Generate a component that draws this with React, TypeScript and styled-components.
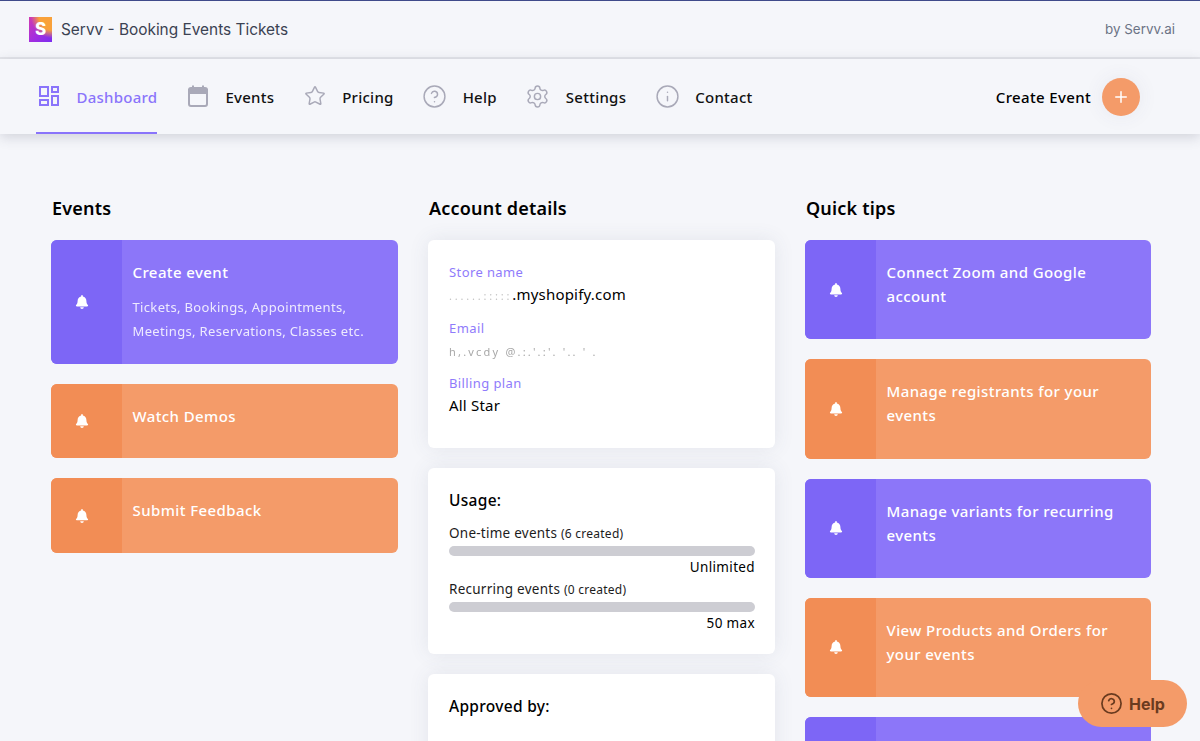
import React from 'react';
import styled, { createGlobalStyle } from 'styled-components';
import { CircleHelp, Info, Plus, Settings, Star } from 'lucide-react';
import { FaBell } from 'react-icons/fa';

const MAVEN = '"Noto Sans", "Open Sans", sans-serif';

const GlobalStyle = createGlobalStyle`
  html, body {
    margin: 0;
    height: 100%;
    overflow: hidden;
    background: #f5f6fa;
  }
  * {
    box-sizing: border-box;
  }
`;

const Page = styled.div`
  height: 741px;
  overflow: hidden;
  border-top: 1px solid #3f4a8a;
  font-family: ${MAVEN};
  color: #000;
`;

const TitleBar = styled.header`
  height: 58px;
  padding: 0 25px 0 29px;
  display: flex;
  align-items: center;
  justify-content: space-between;
  border-bottom: 2px solid #e4e5ea;
  font-family: Inter, sans-serif;
`;

const Brand = styled.div`
  display: flex;
  align-items: center;
  gap: 9px;
  font-size: 15.4px;
  color: #3b4252;
`;

const Logo = styled.div`
  width: 23px;
  height: 25px;
  display: flex;
  align-items: center;
  justify-content: center;
  color: #fff;
  font-size: 17px;
  font-weight: 800;
  background:
    radial-gradient(circle at 100% 0, #f9a13a 0 38%, transparent 62%),
    linear-gradient(135deg, #d13bb0 0%, #a32de0 55%, #7b2df0 100%);
`;

const ByLine = styled.span`
  font-size: 13.4px;
  color: #6b7385;
`;

const NavBar = styled.nav`
  height: 75px;
  padding: 0 60px 0 36px;
  display: flex;
  align-items: stretch;
  justify-content: space-between;
  box-shadow: 0 3px 12px rgba(60, 64, 90, 0.2);
`;

const NavList = styled.div`
  display: flex;
  gap: 27.5px;
`;

const NavItem = styled.a<{ $active?: boolean }>`
  display: flex;
  align-items: center;
  gap: 17.5px;
  padding-left: 3px;
  font-size: 15px;
  font-weight: 500;
  letter-spacing: 0.25px;
  color: ${props => (props.$active ? '#8a74fb' : '#111')};
  border-bottom: 2px solid ${props => (props.$active ? '#8a74fb' : 'transparent')};
  svg {
    flex: none;
    color: ${props => (props.$active ? '#8a74fb' : '#a9a9b8')};
  }
`;

const NavLabel = styled.span`
  margin-top: 2px;
`;

const StarIcon = styled(Star)`
  margin: 0 -1px;
`;

const RoundIcon = styled.span`
  display: flex;
  margin: 1px -2px 0;
`;

const CreateWrap = styled.div`
  display: flex;
  align-items: center;
  gap: 11px;
  font-size: 15px;
  font-weight: 500;
  letter-spacing: 0.35px;
`;

const PlusButton = styled.div`
  width: 38px;
  height: 38px;
  border-radius: 50%;
  display: flex;
  align-items: center;
  justify-content: center;
  color: #fff;
  background: #f49b69;
  box-shadow: 0 0 20px rgba(80, 80, 120, 0.08);
`;

const Columns = styled.main`
  padding: 63px 49px 0 51px;
  display: grid;
  grid-template-columns: 347px 347px 346px;
  column-gap: 30px;
`;

const Column = styled.section`
  display: flex;
  flex-direction: column;
  gap: 20px;
`;

const ColumnTitle = styled.h2`
  margin: 0 0 1px;
  height: 22px;
  line-height: 22px;
  font-size: 18px;
  font-weight: 600;
  letter-spacing: 0.2px;
  padding-left: 1px;
`;

const ActionCard = styled.div<{ $tone: 'purple' | 'orange'; $height: number }>`
  height: ${props => props.$height}px;
  flex: none;
  display: flex;
  border-radius: 6px;
  overflow: hidden;
  color: #fff;
  background: ${props => (props.$tone === 'purple' ? '#8c76f9' : '#f49b69')};
`;

const IconStrip = styled.div<{ $tone: 'purple' | 'orange' }>`
  width: 71px;
  flex: none;
  padding-right: 9px;
  display: flex;
  align-items: center;
  justify-content: center;
  font-size: 14px;
  background: ${props => (props.$tone === 'purple' ? '#7d66f6' : '#f28d55')};
`;

const CardBody = styled.div`
  flex: 1;
  padding: 20px 24px 0 10.5px;
`;

const CardHeading = styled.div`
  font-size: 15px;
  font-weight: 500;
  line-height: 24px;
  letter-spacing: 0.4px;
`;

const CardText = styled.div`
  margin-top: 11px;
  font-size: 13px;
  line-height: 24px;
  letter-spacing: 0.35px;
  opacity: 0.85;
  white-space: nowrap;
`;

const InfoCard = styled.div<{ $height: number }>`
  height: ${props => props.$height}px;
  flex: none;
  padding: 20px 20px 0 21px;
  border-radius: 6px;
  background: #fff;
  box-shadow: 0 0 20px rgba(70, 75, 110, 0.1);
`;

const FieldList = styled.div`
  padding-top: 4px;
`;

const FieldLabel = styled.div`
  height: 17px;
  line-height: 17px;
  margin-bottom: 3px;
  font-size: 13px;
  letter-spacing: 0.4px;
  color: #8f7bfb;
`;

const FieldValue = styled.div`
  height: 21px;
  margin-bottom: 14.5px;
  line-height: 21px;
  font-size: 15px;
  letter-spacing: 0.2px;
  white-space: nowrap;
`;

const Redacted = styled.span<{ $spacing: number; $tone: string }>`
  color: ${props => props.$tone};
  filter: blur(0.7px);
  font-size: 11px;
  letter-spacing: ${props => props.$spacing}px;
`;

const CardHeader = styled.div`
  height: 24px;
  line-height: 24px;
  margin-bottom: 11px;
  font-size: 15.5px;
  font-weight: 500;
  letter-spacing: 0.3px;
`;

const UsageLabel = styled.div`
  height: 20px;
  line-height: 20px;
  font-size: 13.5px;
  letter-spacing: 0.25px;
  color: #1c1c1c;
  small {
    font-size: 12px;
  }
`;

const Track = styled.div`
  height: 10px;
  margin-top: 3px;
  border-radius: 5px;
  background: #cdcdd3;
`;

const UsageLimit = styled.div`
  height: 23px;
  line-height: 22px;
  text-align: right;
  font-size: 13.5px;
  letter-spacing: 0.35px;
`;

const HelpFab = styled.button`
  position: fixed;
  right: 13px;
  bottom: 14px;
  width: 109px;
  height: 47px;
  display: flex;
  align-items: center;
  justify-content: center;
  gap: 6px;
  border: 0;
  border-radius: 24px;
  font-family: Inter, sans-serif;
  font-size: 16px;
  font-weight: 700;
  color: #6a3b1f;
  background: #f49b69;
`;

const DashboardIcon = () => (
  <svg width="20" height="20" viewBox="0 0 20 20" fill="none" stroke="currentColor" strokeWidth="2">
    <rect x="1" y="1" width="8" height="9" />
    <rect x="13" y="1" width="6" height="5" />
    <rect x="1" y="14" width="8" height="5" />
    <rect x="13" y="10" width="6" height="9" />
  </svg>
);

const CalendarIcon = () => (
  <svg width="20" height="22" viewBox="0 0 20 22" fill="none" stroke="currentColor" strokeWidth="2">
    <rect x="1" y="3" width="18" height="18" rx="2" />
    <path d="M1 5h18v3H1z" fill="currentColor" />
    <path d="M5 0.5v3M15 0.5v3" />
  </svg>
);

const tips: { label: string; tone: 'purple' | 'orange' }[] = [
  { label: 'Connect Zoom and Google account', tone: 'purple' },
  { label: 'Manage registrants for your events', tone: 'orange' },
  { label: 'Manage variants for recurring events', tone: 'purple' },
  { label: 'View Products and Orders for your events', tone: 'orange' },
];

const App: React.FC = () => {
  return (
    <Page>
      <GlobalStyle />
      <TitleBar>
        <Brand>
          <Logo>S</Logo>
          Servv - Booking Events Tickets
        </Brand>
        <ByLine>by Servv.ai</ByLine>
      </TitleBar>
      <NavBar>
        <NavList>
          <NavItem $active>
            <DashboardIcon />
            <NavLabel>Dashboard</NavLabel>
          </NavItem>
          <NavItem>
            <CalendarIcon />
            <NavLabel>Events</NavLabel>
          </NavItem>
          <NavItem>
            <StarIcon size={22} strokeWidth={1.6} />
            <NavLabel>Pricing</NavLabel>
          </NavItem>
          <NavItem>
            <RoundIcon>
              <CircleHelp size={25} strokeWidth={1.4} />
            </RoundIcon>
            <NavLabel>Help</NavLabel>
          </NavItem>
          <NavItem>
            <RoundIcon>
              <Settings size={25} strokeWidth={1.4} />
            </RoundIcon>
            <NavLabel>Settings</NavLabel>
          </NavItem>
          <NavItem>
            <RoundIcon>
              <Info size={25} strokeWidth={1.4} />
            </RoundIcon>
            <NavLabel>Contact</NavLabel>
          </NavItem>
        </NavList>
        <CreateWrap>
          Create Event
          <PlusButton>
            <Plus size={18} strokeWidth={2} />
          </PlusButton>
        </CreateWrap>
      </NavBar>
      <Columns>
        <Column>
          <ColumnTitle>Events</ColumnTitle>
          <ActionCard $tone="purple" $height={124}>
            <IconStrip $tone="purple">
              <FaBell />
            </IconStrip>
            <CardBody>
              <CardHeading>Create event</CardHeading>
              <CardText>
                Tickets, Bookings, Appointments,
                <br />
                Meetings, Reservations, Classes etc.
              </CardText>
            </CardBody>
          </ActionCard>
          <ActionCard $tone="orange" $height={74}>
            <IconStrip $tone="orange">
              <FaBell />
            </IconStrip>
            <CardBody>
              <CardHeading>Watch Demos</CardHeading>
            </CardBody>
          </ActionCard>
          <ActionCard $tone="orange" $height={75}>
            <IconStrip $tone="orange">
              <FaBell />
            </IconStrip>
            <CardBody>
              <CardHeading>Submit Feedback</CardHeading>
            </CardBody>
          </ActionCard>
        </Column>
        <Column>
          <ColumnTitle>Account details</ColumnTitle>
          <InfoCard $height={208}>
            <FieldList>
              <FieldLabel>Store name</FieldLabel>
              <FieldValue>
                <Redacted $spacing={2.8} $tone="#c4c4c4">......:::::</Redacted>.myshopify.com
              </FieldValue>
              <FieldLabel>Email</FieldLabel>
              <FieldValue>
                <Redacted $spacing={2.2} $tone="#a8a8a8">h,.vcdy @.:.'.:'. '.. ' .</Redacted>
              </FieldValue>
              <FieldLabel>Billing plan</FieldLabel>
              <FieldValue>All Star</FieldValue>
            </FieldList>
          </InfoCard>
          <InfoCard $height={186}>
            <CardHeader>Usage:</CardHeader>
            <UsageLabel>
              One-time events <small>(6 created)</small>
            </UsageLabel>
            <Track />
            <UsageLimit>Unlimited</UsageLimit>
            <UsageLabel>
              Recurring events <small>(0 created)</small>
            </UsageLabel>
            <Track />
            <UsageLimit>50 max</UsageLimit>
          </InfoCard>
          <InfoCard $height={200}>
            <CardHeader>Approved by:</CardHeader>
          </InfoCard>
        </Column>
        <Column>
          <ColumnTitle>Quick tips</ColumnTitle>
          {tips.map(tip => (
            <ActionCard key={tip.label} $tone={tip.tone} $height={99.25}>
              <IconStrip $tone={tip.tone}>
                <FaBell />
              </IconStrip>
              <CardBody>
                <CardHeading>{tip.label}</CardHeading>
              </CardBody>
            </ActionCard>
          ))}
          <ActionCard $tone="purple" $height={99.25}>
            <IconStrip $tone="purple" />
          </ActionCard>
        </Column>
      </Columns>
      <HelpFab>
        <CircleHelp size={23} strokeWidth={1.8} />
        Help
      </HelpFab>
    </Page>
  );
};

export default App;
